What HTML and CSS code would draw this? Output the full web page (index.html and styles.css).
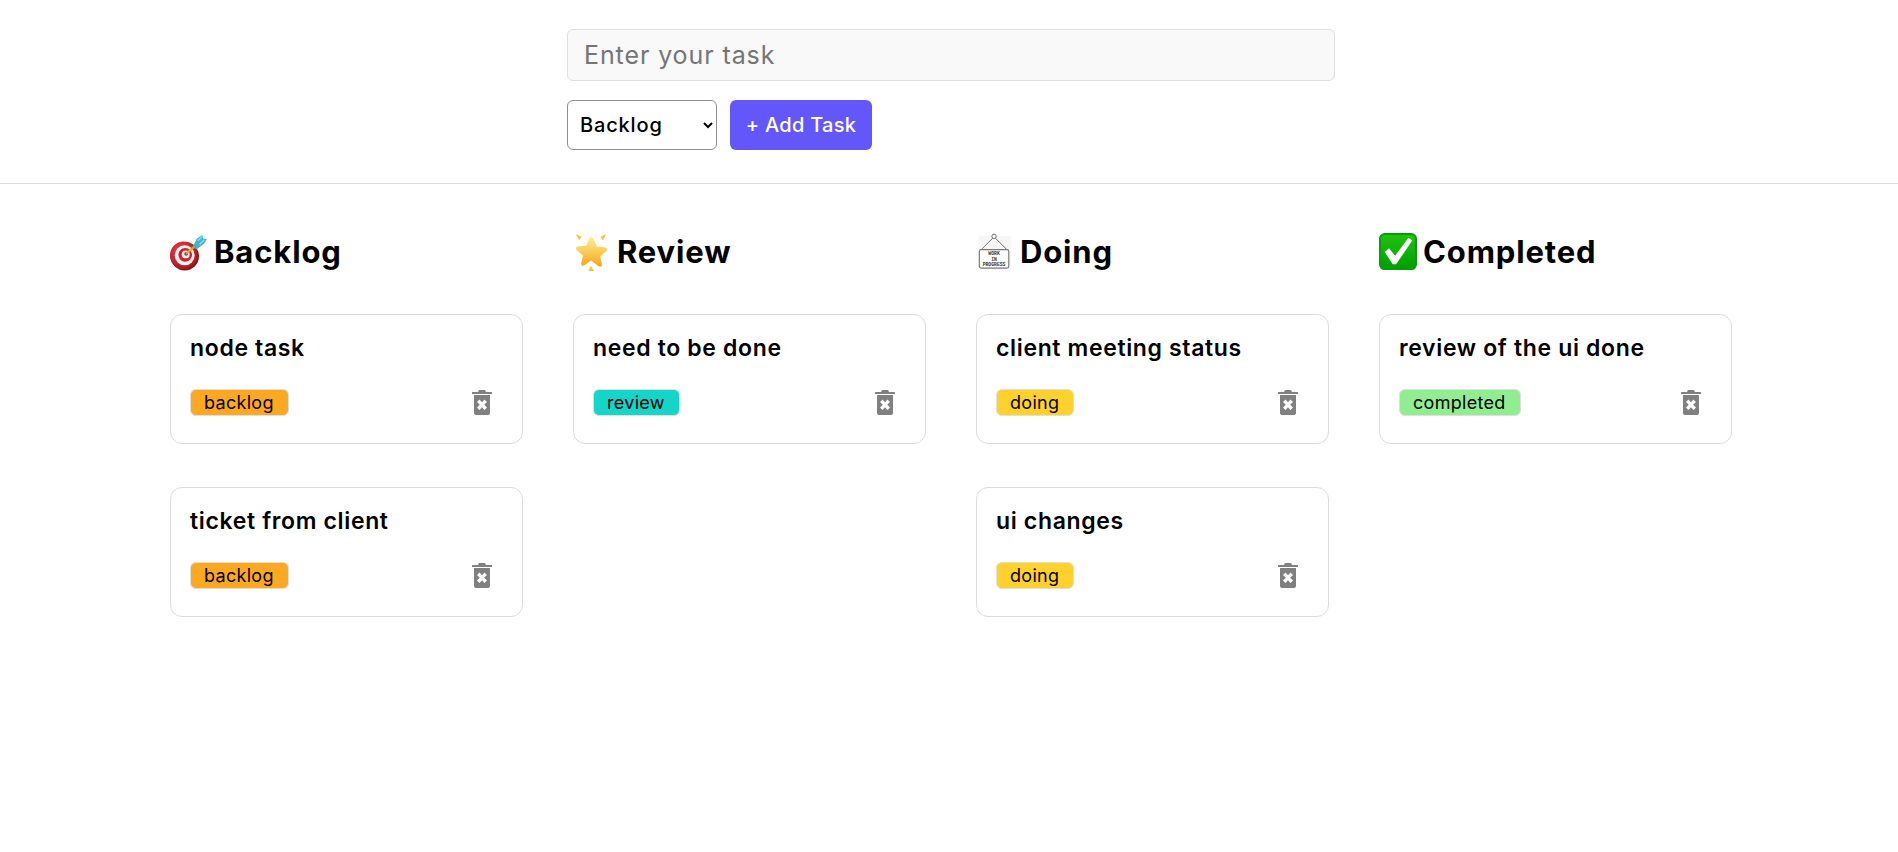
FILE: index.html
```html
<!DOCTYPE html>
<html lang="en">
<head>
<meta charset="utf-8">
<title>Task Board</title>
<link rel="stylesheet" href="styles.css">
</head>
<body>
<header class="app-header">
  <form class="task-form">
    <input class="task-input" type="text" placeholder="Enter your task">
    <div class="form-row">
      <select class="task-status">
        <option>Backlog</option>
        <option>Review</option>
        <option>Doing</option>
        <option>Completed</option>
      </select>
      <button class="task-submit" type="button">+ Add Task</button>
    </div>
  </form>
</header>
<main class="board">
  <section class="column">
    <h2 class="column-title">
      <svg class="emoji" viewBox="0 0 40 40"><defs><radialGradient id="dr" cx="40%" cy="35%" r="70%"><stop offset="0" stop-color="#f0424a"/><stop offset="1" stop-color="#a3151c"/></radialGradient></defs><circle cx="15.500" cy="24.500" r="15" fill="#8d1218"/><circle cx="14.500" cy="23.500" r="14.500" fill="url(#dr)"/><circle cx="15.500" cy="23.500" r="10.500" fill="#f2f0ee"/><circle cx="16" cy="23" r="7.200" fill="#c9222b"/><circle cx="16.500" cy="22.500" r="4.200" fill="#f4f1ef"/><circle cx="17" cy="22" r="2" fill="#c9222b"/><path d="M17 22 27 13" stroke="#e0a93a" stroke-width="2.200"/><path d="M24 15 28 6l6-4 1 4 4 0-3 5-8 6z" fill="#3fb4c6"/><path d="M29 8l5-4M31 12l5-5" stroke="#8fdce6" stroke-width="1.500"/></svg>
      Backlog
    </h2>
    <article class="card">
      <h3 class="card-title">node task</h3>
      <div class="card-foot">
        <span class="tag tag-backlog">backlog</span>
        <button class="delete" type="button" aria-label="Delete"><svg class="trash" viewBox="0 0 20 25"><path d="M7 0h6l1 2h5.500a.5.500 0 0 1 .5.500V4H0V2.500A.5.500 0 0 1 .5 2H6z"/><path fill-rule="evenodd" d="M2 5h16v18a2 2 0 0 1-2 2H4a2 2 0 0 1-2-2zM7.500 9.500 5 12l2.800 2.800L5 17.500 7.500 20l2.500-2.700 2.500 2.700 2.500-2.500-2.800-2.700L15 12l-2.500-2.500-2.500 2.700z"/></svg></button>
      </div>
    </article>
    <article class="card">
      <h3 class="card-title">ticket from client</h3>
      <div class="card-foot">
        <span class="tag tag-backlog">backlog</span>
        <button class="delete" type="button" aria-label="Delete"><svg class="trash" viewBox="0 0 20 25"><path d="M7 0h6l1 2h5.500a.5.500 0 0 1 .5.500V4H0V2.500A.5.500 0 0 1 .5 2H6z"/><path fill-rule="evenodd" d="M2 5h16v18a2 2 0 0 1-2 2H4a2 2 0 0 1-2-2zM7.500 9.500 5 12l2.800 2.800L5 17.500 7.500 20l2.500-2.700 2.500 2.700 2.500-2.500-2.800-2.700L15 12l-2.500-2.500-2.500 2.700z"/></svg></button>
      </div>
    </article>
  </section>
  <section class="column">
    <h2 class="column-title">
      <svg class="emoji" viewBox="0 0 40 40"><defs><linearGradient id="st" x1="0" y1="0" x2="0" y2="1"><stop offset="0" stop-color="#fff0a0"/><stop offset="1" stop-color="#f6a50f"/></linearGradient></defs><path d="M19 4.500c1.700 0 2.500 1.200 3.400 3.300l2.700 6.500 7.600.7c3.400.3 4.200 2.300 1.800 4.500l-6 5.200 1.800 7.500c.7 3-1.100 4.100-3.700 2.600L19 29l-6.600 4.800c-2.600 1.500-4.400.4-3.700-2.600l1.800-7.500-6-5.200c-2.400-2.200-1.600-4.200 1.800-4.500l7.600-.7 2.700-6.500c.9-2.100 1.700-3.300 3.400-3.300z" fill="url(#st)"/><path d="M3 1l6 3-2.500 3.500zM35 1l-6 3 2.500 3.500zM19 34.500l3 5.500h-6z" fill="#f9c436"/></svg>
      Review
    </h2>
    <article class="card">
      <h3 class="card-title">need to be done</h3>
      <div class="card-foot">
        <span class="tag tag-review">review</span>
        <button class="delete" type="button" aria-label="Delete"><svg class="trash" viewBox="0 0 20 25"><path d="M7 0h6l1 2h5.500a.5.500 0 0 1 .5.500V4H0V2.500A.5.500 0 0 1 .5 2H6z"/><path fill-rule="evenodd" d="M2 5h16v18a2 2 0 0 1-2 2H4a2 2 0 0 1-2-2zM7.500 9.500 5 12l2.800 2.800L5 17.500 7.500 20l2.500-2.700 2.500 2.700 2.500-2.500-2.800-2.700L15 12l-2.500-2.500-2.500 2.700z"/></svg></button>
      </div>
    </article>
  </section>
  <section class="column">
    <h2 class="column-title">
      <svg class="emoji" viewBox="0 0 40 40"><rect x="3" y="3" width="34" height="34" fill="#f6f6f6"/><circle cx="19" cy="3.500" r="2.300" fill="#fff" stroke="#666" stroke-width="1"/><path d="M17.500 5.500 5 18M20.500 5.500 33 18" fill="none" stroke="#666" stroke-width="1"/><rect x="3.500" y="17.500" width="31" height="19.500" rx="2" fill="#fff" stroke="#777" stroke-width="1.200"/><text class="sign" x="19" y="23.500">WORK</text><text class="sign" x="19" y="29">IN</text><text class="sign" x="19" y="34.500">PROGRESS</text></svg>
      Doing
    </h2>
    <article class="card">
      <h3 class="card-title">client meeting status</h3>
      <div class="card-foot">
        <span class="tag tag-doing">doing</span>
        <button class="delete" type="button" aria-label="Delete"><svg class="trash" viewBox="0 0 20 25"><path d="M7 0h6l1 2h5.500a.5.500 0 0 1 .5.500V4H0V2.500A.5.500 0 0 1 .5 2H6z"/><path fill-rule="evenodd" d="M2 5h16v18a2 2 0 0 1-2 2H4a2 2 0 0 1-2-2zM7.500 9.500 5 12l2.800 2.800L5 17.500 7.500 20l2.500-2.700 2.500 2.700 2.500-2.500-2.800-2.700L15 12l-2.500-2.500-2.500 2.700z"/></svg></button>
      </div>
    </article>
    <article class="card">
      <h3 class="card-title">ui changes</h3>
      <div class="card-foot">
        <span class="tag tag-doing">doing</span>
        <button class="delete" type="button" aria-label="Delete"><svg class="trash" viewBox="0 0 20 25"><path d="M7 0h6l1 2h5.500a.5.500 0 0 1 .5.500V4H0V2.500A.5.500 0 0 1 .5 2H6z"/><path fill-rule="evenodd" d="M2 5h16v18a2 2 0 0 1-2 2H4a2 2 0 0 1-2-2zM7.500 9.500 5 12l2.800 2.800L5 17.500 7.500 20l2.500-2.700 2.500 2.700 2.500-2.500-2.800-2.700L15 12l-2.500-2.500-2.500 2.700z"/></svg></button>
      </div>
    </article>
  </section>
  <section class="column">
    <h2 class="column-title">
      <svg class="emoji" viewBox="0 0 40 40"><defs><linearGradient id="ck" x1="0" y1="0" x2="0" y2="1"><stop offset="0" stop-color="#1fc40f"/><stop offset="1" stop-color="#009f00"/></linearGradient></defs><rect x="0" y="0" width="40" height="39" rx="6" fill="#0a9a0a"/><rect x="2" y="2" width="36" height="35" rx="4" fill="url(#ck)"/><path d="M6 20l4.500-4 6.500 8L31 5l4 3-17 25h-3.500z" fill="#fff"/></svg>
      Completed
    </h2>
    <article class="card">
      <h3 class="card-title">review of the ui done</h3>
      <div class="card-foot">
        <span class="tag tag-completed">completed</span>
        <button class="delete" type="button" aria-label="Delete"><svg class="trash" viewBox="0 0 20 25"><path d="M7 0h6l1 2h5.500a.5.500 0 0 1 .5.500V4H0V2.500A.5.500 0 0 1 .5 2H6z"/><path fill-rule="evenodd" d="M2 5h16v18a2 2 0 0 1-2 2H4a2 2 0 0 1-2-2zM7.500 9.500 5 12l2.800 2.800L5 17.500 7.500 20l2.500-2.700 2.500 2.700 2.500-2.500-2.800-2.700L15 12l-2.500-2.500-2.500 2.700z"/></svg></button>
      </div>
    </article>
  </section>
</main>
</body>
</html>
```
FILE: styles.css
```css
* { box-sizing: border-box; }
html, body { margin: 0; padding: 0; background: #fff; }
body { font-family: Inter, "Open Sans", sans-serif; color: #000; height: 852px; overflow: hidden; }

.app-header {
  height: 184px;
  padding: 29px 0 0 4px;
  border-bottom: 1px solid #dcdcdc;
  display: flex;
  justify-content: center;
}
.task-form { width: 768px; }
.task-input {
  display: block;
  width: 100%;
  height: 52px;
  padding: 0 16px;
  font: 400 25px Inter, sans-serif;
  letter-spacing: .9px;
  background: #f9f9f9;
  border: 1px solid #dfdfdf;
  border-radius: 6px;
  color: #000;
}
.task-input::placeholder { color: #757575; opacity: 1; }
.form-row { display: flex; align-items: center; gap: 13px; margin-top: 19px; }
.task-status {
  width: 150px;
  height: 50px;
  padding: 0 8px;
  font: 500 20px Inter, sans-serif;
  letter-spacing: .85px;
  background: #fff;
  color: #000;
  border: 1px solid #8f8f8f;
  border-radius: 6px;
}
.task-submit {
  width: 142px;
  height: 50px;
  font: 500 20px Inter, sans-serif;
  letter-spacing: .3px;
  color: #fff;
  background: #6457f9;
  border: 0;
  border-radius: 6px;
}

.board {
  display: grid;
  grid-template-columns: repeat(4, 353px);
  column-gap: 50px;
  padding: 48px 0 0 170px;
}
.column-title {
  display: flex;
  align-items: center;
  gap: 6px;
  height: 40px;
  margin: 0 0 42px;
  font-size: 31px;
  font-weight: 700;
  letter-spacing: .85px;
  line-height: 40px;
}
.emoji { width: 38px; height: 38px; flex: none; }
.sign { font: 700 5px "Liberation Mono", monospace; text-anchor: middle; letter-spacing: 0; fill: #333; }

.card {
  height: 130px;
  margin-bottom: 43px;
  padding: 19px 19px 18px;
  background: #fff;
  border: 1px solid #dcdcdc;
  border-radius: 12px;
}
.card-title {
  margin: 0;
  font-size: 23px;
  font-weight: 600;
  letter-spacing: .65px;
  line-height: 28px;
}
.card-foot {
  display: flex;
  align-items: center;
  justify-content: space-between;
  margin-top: 27px;
}
.tag {
  display: inline-block;
  height: 27px;
  padding: 0 14px 0 13px;
  font-size: 18px;
  font-weight: 400;
  letter-spacing: .3px;
  line-height: 25px;
  border: 1px solid #dfdfdf;
  border-radius: 6px;
}
.tag-backlog { background: #fda821; }
.tag-review { background: #15d4c8; }
.tag-doing { background: #ffd12c; }
.tag-completed { background: #90ee90; }
.delete {
  display: flex;
  padding: 0;
  margin-right: 11px;
  background: none;
  border: 0;
}
.trash { width: 20px; height: 25px; fill: #808080; }
```
